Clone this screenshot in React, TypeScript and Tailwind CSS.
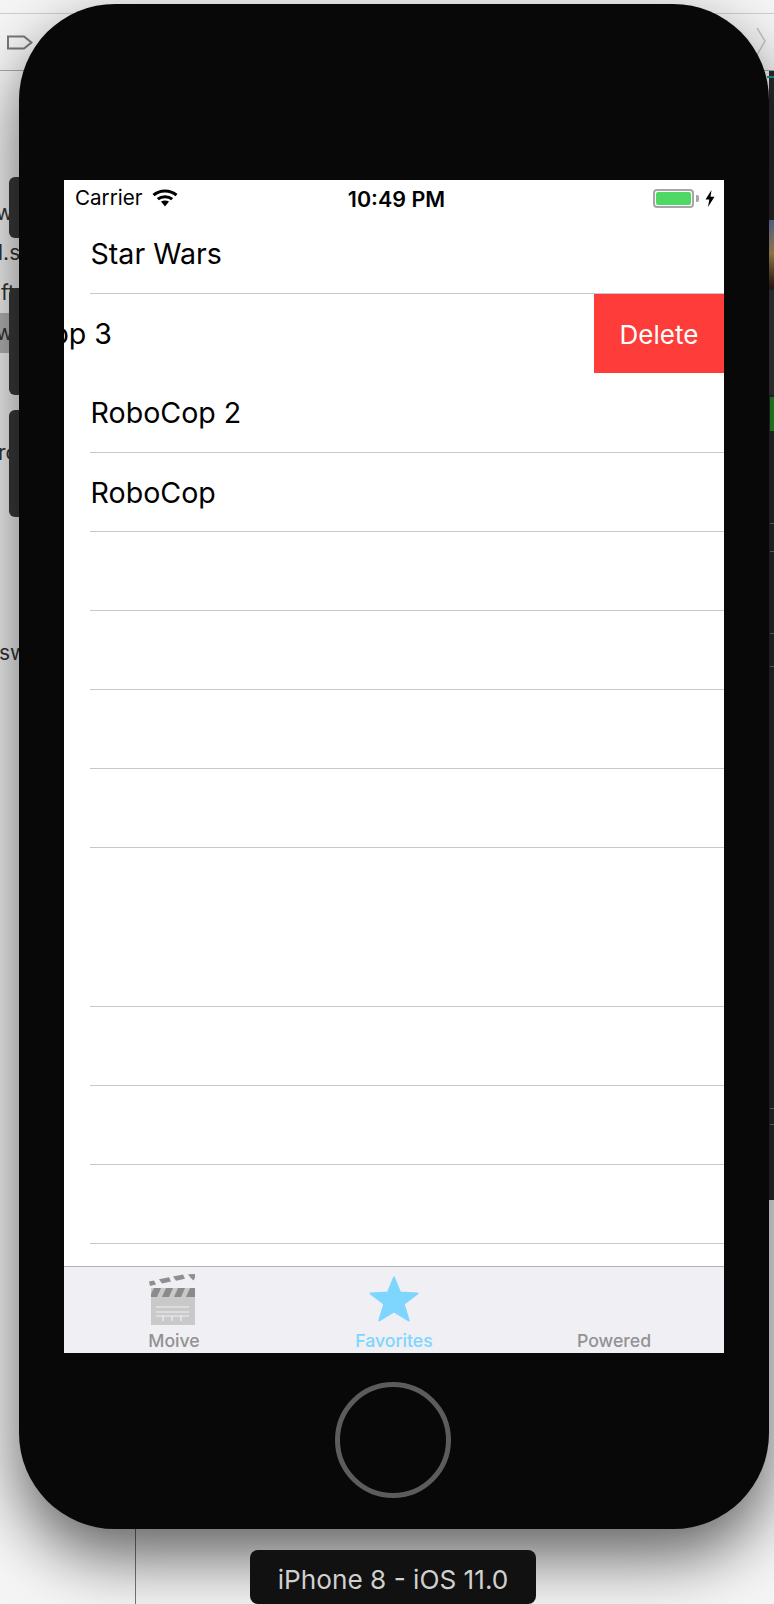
const rows = [
  { title: "Star Wars", height: "h-[80px]" },
  { title: "", height: "h-[79px]", swiped: "RoboCop 3" },
  { title: "RoboCop 2", height: "h-[80px]" },
  { title: "RoboCop", height: "h-[79px]" },
  { title: "", height: "h-[79px]" },
  { title: "", height: "h-[79px]" },
  { title: "", height: "h-[79px]" },
  { title: "", height: "h-[79px]" },
  { title: "", height: "h-[159px]" },
  { title: "", height: "h-[79px]" },
  { title: "", height: "h-[79px]" },
  { title: "", height: "h-[79px]" },
]

// what shows of the editor's file list behind the phone, 40px per line
const sidebarLines = [
  { text: "wi", className: "-ml-[4px]" },
  { text: "l.s", className: "-ml-[2px]" },
  { text: "ft", className: "ml-[1px]" },
  { text: "w", className: "-ml-[4px]" },
  { text: "", className: "" },
  { text: "", className: "" },
  { text: "rc", className: "-ml-[2px]" },
  { text: "", className: "" },
  { text: "", className: "" },
  { text: "", className: "" },
  { text: "", className: "" },
  { text: "sw", className: "-ml-[1px]" },
]

function Wifi() {
  return (
    <svg width="26" height="18" viewBox="0 0 26 18" fill="none" className="ml-[9px]">
      <path d="M1.5 6.2C7.8.6 18.2.6 24.5 6.2" stroke="#000" strokeWidth="3" />
      <path d="M5.8 10.2C9.8 6.9 16.2 6.9 20.2 10.2" stroke="#000" strokeWidth="3" />
      <path d="M9 12.6C11.400 11 14.600 11 17 12.600L13 17.500Z" fill="#000" />
    </svg>
  )
}

function Battery() {
  return (
    <div className="flex items-center">
      <div className="w-[41px] h-[19px] border-2 border-[#a6a6a6] rounded-[4px] p-[1px]">
        <div className="w-full h-full bg-[#4fd964] rounded-[2px]" />
      </div>
      <div className="w-[3px] h-[7px] ml-[2px] bg-[#a6a6a6] rounded-r-[2px]" />
      <svg width="10" height="17" viewBox="0 0 10 17" className="ml-[6px]">
        <path d="M6.500 0L0.500 9.500H4.300L3 17L9.500 6.800H5.500Z" fill="#000" />
      </svg>
    </div>
  )
}

function Clapper() {
  return (
    <svg width="46" height="51" viewBox="0 0 46 51" className="-ml-[4px]">
      <path d="M0 7.500L5 6.400L7 10.600L1 12Z" fill="#8f8f8f" />
      <path d="M10 5.300L20 3.300L22 7.500L13 9.400Z" fill="#8f8f8f" />
      <path d="M24 2.500L34 .6L36 4.800L27 6.700Z" fill="#8f8f8f" />
      <path d="M39 .3L46 0V3.500L44.500 6.500L41.500 3.800Z" fill="#8f8f8f" />
      <path d="M2 14H46V51H2Z" fill="#c9c9c9" />
      <path d="M5 14H12L8 23H2V20Z" fill="#8b8b8b" />
      <path d="M17 14H24L20 23H13Z" fill="#8b8b8b" />
      <path d="M29 14H36L32 23H25Z" fill="#8b8b8b" />
      <path d="M41 14H46V23H37Z" fill="#8b8b8b" />
      <path d="M7 33H40M7 38H40M7 42H40" stroke="#efeff4" strokeWidth="1.200" />
      <path d="M14 42V47M23 42V47M32 42V47" stroke="#efeff4" strokeWidth="1.200" />
    </svg>
  )
}

function Star() {
  return (
    <svg width="50" height="46" viewBox="0 0 50 46">
      <path
        d="M25 1.500L31 16.400L48.500 17.400L34.700 28L39.700 44.500L25 35.400L10.300 44.500L15.300 28L1.500 17.400L19 16.400Z"
        fill="#7ed6ff"
        stroke="#7ed6ff"
        strokeWidth="2"
        strokeLinejoin="round"
      />
    </svg>
  )
}

function Row({ row }: { row: (typeof rows)[number] }) {
  if (row.swiped) {
    return (
      <div className={`${row.height} flex justify-between items-center`}>
        <span className="-ml-[103px] pt-[2px] whitespace-nowrap">{row.swiped}</span>
        <div className="w-[130px] h-full flex items-center justify-center pt-[2px] bg-[#fe3d3a] text-white text-[26px]">
          Delete
        </div>
      </div>
    )
  }
  return (
    <div className={`${row.height} flex flex-col`}>
      <div className="flex-1 flex items-center pt-[2px] pl-[26.500px]">{row.title}</div>
      <div className="ml-[26px] h-px bg-[#c8c7cc]" />
    </div>
  )
}

function Screen() {
  return (
    <div className="mx-[45px] mt-[176px] h-[1173px] flex flex-col overflow-hidden bg-white text-black">
      {/* status bar */}
      <div className="h-[34px] shrink-0 relative flex items-center justify-between pt-[2px] pl-[11px] pr-[9px] text-[20.600px]">
        <div className="flex items-center">
          Carrier
          <Wifi />
        </div>
        <div className="absolute left-0 right-0 pl-[5px] pt-[3px] text-center text-[21.500px] font-semibold">10:49 PM</div>
        <Battery />
      </div>

      <div className="flex-1 flex flex-col overflow-hidden text-[28.600px]">
        {rows.map((row, i) => (
          <Row key={i} row={row} />
        ))}
      </div>

      {/* tab bar */}
      <div className="h-[87px] shrink-0 grid grid-cols-3 border-t border-[#b2b2b2] bg-[#efeff4] text-[17.700px] font-medium text-[#929292]">
        <div className="flex flex-col items-center pt-[7px]">
          <Clapper />
          <span className="leading-[17px] mt-[7px]">Moive</span>
        </div>
        <div className="flex flex-col items-center pt-[9px] text-[#7ed6ff]">
          <Star />
          <span className="leading-[17px] mt-[10px]">Favorites</span>
        </div>
        <div className="flex flex-col items-center pt-[65px]">
          <span className="leading-[17px]">Powered</span>
        </div>
      </div>
    </div>
  )
}

function LeftPanel() {
  return (
    <>
      <div className="absolute left-0 top-[193px] w-[20px] flex flex-col text-[21px] leading-[40px] text-[#333]">
        {sidebarLines.map((line, i) => (
          <div key={i} className={`h-[40px] whitespace-nowrap ${i === 3 ? "bg-[#b4b4b4]" : ""}`}>
            <div className={line.className}>{line.text}</div>
          </div>
        ))}
      </div>
      <div className="absolute left-[9px] top-[177px] w-[20px] flex flex-col">
        <div className="h-[61px] rounded-[6px] bg-[#3a3a3a]" />
        <div className="h-[107px] mt-[50px] rounded-[6px] bg-[#3a3a3a]" />
        <div className="h-[107px] mt-[15px] rounded-[6px] bg-[#3a3a3a]" />
      </div>
    </>
  )
}

function RightPanel() {
  return (
    <div className="absolute left-[769px] top-[71px] w-[5px] h-[1129px] flex flex-col bg-[#2b2b2b]">
      <div className="h-[2px] mt-[5px] -ml-[2px] bg-[#1d9a9a]" />
      <div className="h-[67px] mt-[142px] bg-gradient-to-b from-[#6d80b0] via-[#c0a060] to-[#3a2018]" />
      <div className="h-[105px] mt-[3px] -ml-[2px] bg-[#3a3a3a]" />
      <div className="h-[34px] mt-[2px] ml-[1px] bg-[#2a9a2a]" />
      <div className="h-px mt-[92px] ml-[1px] bg-[#777]" />
      <div className="h-px mt-[27px] ml-[1px] bg-[#777]" />
      <div className="h-px mt-[81px] ml-[1px] bg-[#777]" />
      <div className="h-px mt-[32px] ml-[1px] bg-[#777]" />
      <div className="h-px mt-[441px] ml-[1px] bg-[#777]" />
      <div className="h-px mt-[15px] ml-[1px] bg-[#777]" />
    </div>
  )
}

function Toolbar() {
  return (
    <div className="absolute left-0 right-0 top-[13px] h-[58px] flex items-center justify-between pl-[7px] pr-[8px] border-y border-t-[#cfcfcf] border-b-[#a9a9a9]">
      <svg width="26" height="15" viewBox="0 0 26 15" fill="none">
        <path d="M1 1.500H17L24.500 7.500L17 13.500H1Z" stroke="#777" strokeWidth="2" />
      </svg>
      <svg width="10" height="30" viewBox="0 0 10 30" fill="none">
        <path d="M1 1L9 14L1 28" stroke="#c4c4c4" strokeWidth="1.500" />
      </svg>
    </div>
  )
}

export default function App() {
  return (
    <div className="relative w-[774px] h-[1604px] overflow-hidden bg-[#f5f5f5] font-[family-name:Inter,'Liberation_Sans',sans-serif]">
      <Toolbar />
      <LeftPanel />
      <RightPanel />
      <div className="absolute left-[135px] top-[1529px] w-px h-[75px] bg-[#777]" />

      {/* simulator window */}
      <div className="absolute left-[19px] top-[4px] w-[750px] h-[1525px] rounded-[96px] bg-[#080808] shadow-[0_28px_64px_rgba(0,0,0,0.6)] overflow-hidden">
        <Screen />
        <div className="ml-[316px] mt-[29px] size-[116px] rounded-full border-[5px] border-[#5c5c5c]" />
      </div>

      <div className="absolute left-[250px] top-[1550px] w-[286px] h-[54px] pt-[5px] rounded-[8px] bg-[#111] flex items-center justify-center text-[26.200px] text-[#d0d0d0]">
        iPhone 8 - iOS 11.0
      </div>
    </div>
  )
}
